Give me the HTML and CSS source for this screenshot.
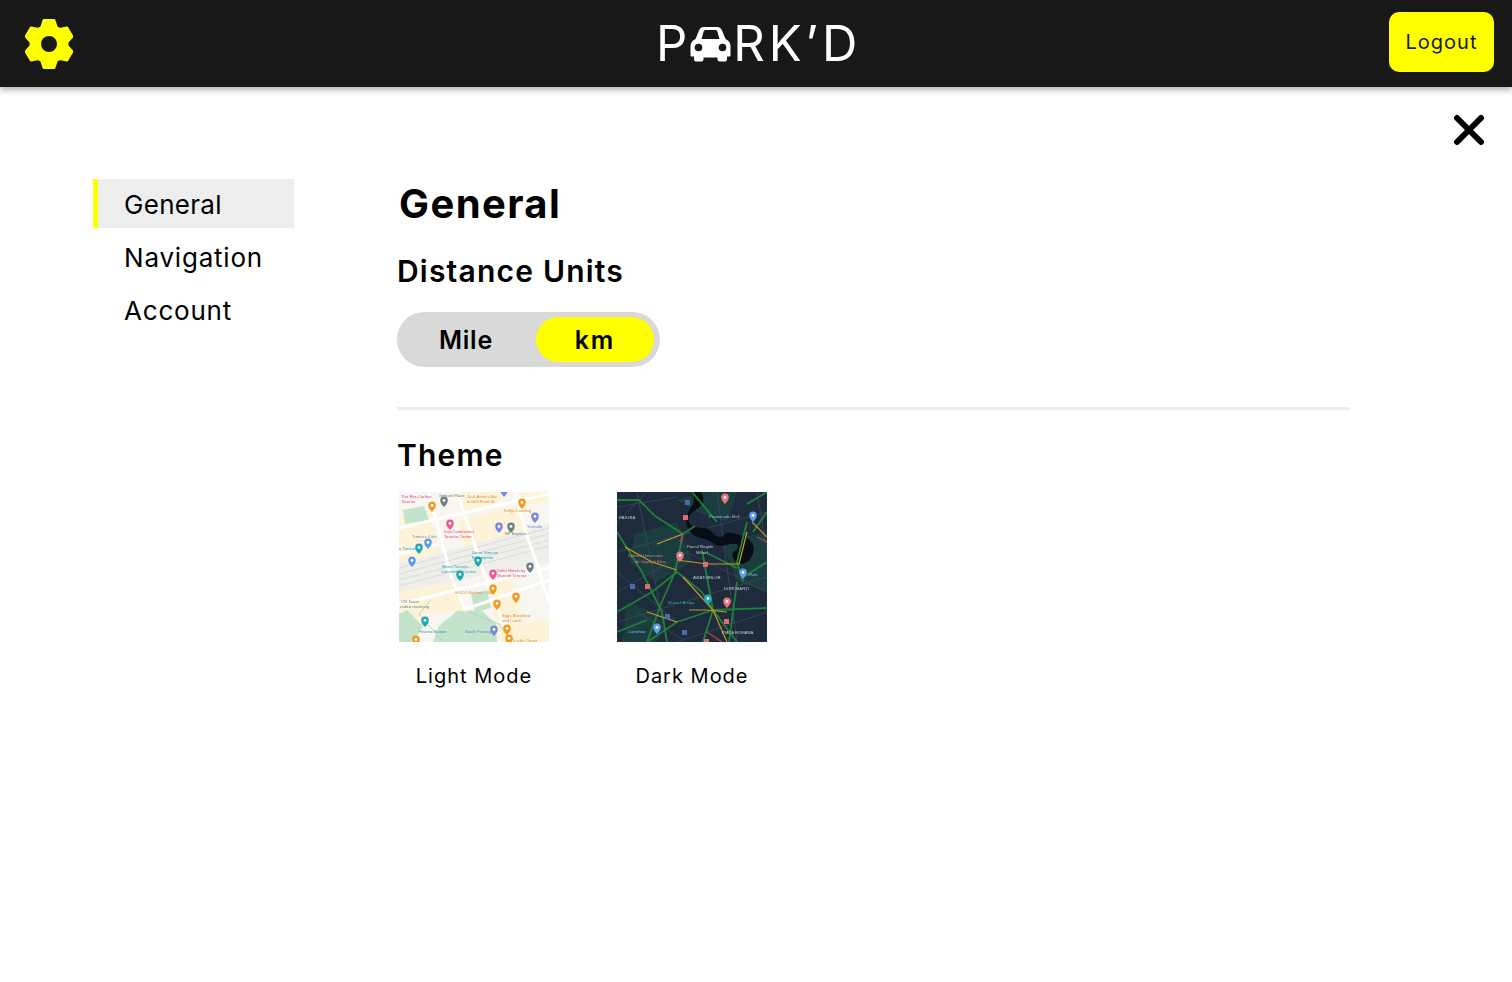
FILE: index.html
```html
<!DOCTYPE html>
<html>
<head>
	<meta charset="UTF-8">
	<title>Park'd</title>
	<link rel="stylesheet" href="styles.css">
</head>
<body>
	<header class="topbar">
		<svg class="gear" viewBox="0 0 48 50">
			<g transform="translate(24 25)">
				<circle r="18" class="gear-fill"/>
				<path class="gear-fill" d="M-5 -23.500H5L8 -14V14L5 23.500H-5L-8 14V-14Z"/>
				<path class="gear-fill" d="M-5 -23.500H5L8 -14V14L5 23.500H-5L-8 14V-14Z" transform="rotate(60)"/>
				<path class="gear-fill" d="M-5 -23.500H5L8 -14V14L5 23.500H-5L-8 14V-14Z" transform="rotate(120)"/>
				<circle r="8" class="gear-hole"/>
			</g>
		</svg>
		<div class="logo">
			<span class="logo-p">P</span>
			<svg class="car" viewBox="0 0 41 36">
				<path class="car-body" d="M9 4.500C10 2 11.500 1 14 1H27C29.500 1 31 2 32 4.500L35.500 13C38.500 14.500 40.500 16.500 40.500 20V29C40.500 30 40 30.500 39 30.500H37V33C37 35 36 35.500 34.500 35.500H30C28 35.500 27.500 34.500 27.500 33V31.500H13.500V33C13.500 34.500 13 35.500 11 35.500H6.500C5 35.500 4 35 4 33V30.500H2C1 30.500 .5 30 .5 29V20C.5 16.500 2.500 14.500 5.500 13Z"/>
				<path class="car-cut" d="M11.500 13L13.500 6C14 4.500 14.500 4 16 4H25C26.500 4 27 4.500 27.500 6L29.500 13Z"/>
				<circle class="car-cut" cx="8.500" cy="21.500" r="3.800"/>
				<circle class="car-cut" cx="32.500" cy="21.500" r="3.800"/>
			</svg>
			<span class="logo-rest">RK’D</span>
		</div>
		<button class="logout">Logout</button>
	</header>

	<div class="close-row">
		<svg class="close" viewBox="0 0 32 32">
			<path d="M4 4L28 28M28 4L4 28"/>
		</svg>
	</div>

	<main class="settings">
		<nav class="side">
			<a class="side-item active">General</a>
			<a class="side-item">Navigation</a>
			<a class="side-item">Account</a>
		</nav>

		<section class="panel">
			<h1>General</h1>
			<h2 class="units-title">Distance Units</h2>
			<div class="toggle">
				<span class="toggle-opt">Mile</span>
				<span class="toggle-opt on">km</span>
			</div>
			<hr class="line">
			<h2>Theme</h2>
			<div class="themes">
				<div class="theme">
					<svg class="thumb" viewBox="0 0 150 150">
						<defs>
							<g id="pin"><path d="M0 3C-1.800 .6-3.800 -1-3.800 -3.600A3.800 3.800 0 0 1 3.800 -3.600C3.800 -1 1.800 .6 0 3Z"/><circle cy="-3.600" r="1.400" fill="#fff"/></g>
						</defs>
						<rect width="150" height="150" class="m-land"/>
						<path class="m-block" d="M0 25L30 18L42 60L0 72ZM58 28L118 14L128 42L68 62ZM12 92L55 82L66 118L30 122L14 135L0 135L0 98ZM88 90L112 82L124 128L96 128ZM98 132L150 128V150H100ZM120 0H150V8L126 14ZM60 0H100L105 8L62 20ZM128 40L150 34V70L138 72Z"/>
						<path class="m-grey" d="M0 72L150 32V70L0 100Z"/>
						<path class="m-road2" d="M0 76L150 36M0 82L150 42M0 88L150 48M0 94L150 54"/>
						<path class="m-park" d="M34 150L40 134L58 119L82 118L97 132L98 150Z"/>
						<path class="m-park" d="M72 102L88 98L92 116L76 120Z"/>
						<path class="m-park" d="M0 122L8 118L24 134L14 150H0Z"/>
						<path class="m-park" d="M4 18L25 14L30 28L6 32Z"/>
						<path class="m-road" d="M0 36L60 22L150 2M58 0L68 30L86 84L112 150M116 0L126 38L138 72L150 110M30 0L44 54L52 84L66 118M0 112L66 96L150 76M64 118L150 88M0 62L40 52"/>
						<path class="m-tint" d="M32 108L20 122L44 150M70 120L100 132L112 150"/>

						<text class="lab pink" x="2" y="6">The Ritz-Carlton,</text>
						<text class="lab pink" x="2" y="10.500">Toronto</text>
						<text class="lab grey" x="40" y="5">Simcoe Place</text>
						<text class="lab orange" x="68" y="6">Jack Astor's Bar</text>
						<text class="lab orange" x="68" y="10.500">&amp; Grill Front St</text>
						<text class="lab orange" x="105" y="20">Kellys Landing</text>
						<text class="lab purple" x="128" y="36">Yorkville</text>
						<text class="lab grey" x="106" y="43">BP Express</text>
						<text class="lab pink" x="45" y="41">InterContinental</text>
						<text class="lab pink" x="45" y="45.500">Toronto Centre</text>
						<text class="lab purple" x="13" y="46">Tumoss Cafe</text>
						<text class="lab teal" x="0" y="58">a Toronto</text>
						<text class="lab teal" x="73" y="62">Union Simcoe</text>
						<text class="lab teal" x="73" y="66.500">Bridgepoint</text>
						<text class="lab teal" x="43" y="76">Metro Toronto</text>
						<text class="lab teal" x="42" y="80.500">Convention Centre</text>
						<text class="lab pink" x="98" y="80">Delta Hotels by</text>
						<text class="lab pink" x="98" y="84.500">Marriott Toronto</text>
						<text class="lab orange" x="56" y="102">SOCO Kitchen + Bar</text>
						<text class="lab grey" x="2" y="111">CN Tower</text>
						<text class="lab grey" x="1" y="115.500">rsdica revolving</text>
						<text class="lab orange" x="103" y="125">Eggs Breakfast</text>
						<text class="lab orange" x="103" y="129.500">and Lunch</text>
						<text class="lab teal" x="20" y="141">Historic Roque</text>
						<text class="lab purple" x="66" y="141">South Parking</text>
						<text class="lab orange" x="114" y="150">Lucky Clover</text>

						<use href="#pin" class="p-orange" x="33" y="17"/>
						<use href="#pin" class="p-grey" x="45" y="12"/>
						<use href="#pin" class="p-orange" x="123" y="14"/>
						<use href="#pin" class="p-purple" x="105" y="2"/>
						<use href="#pin" class="p-purple" x="136" y="28"/>
						<use href="#pin" class="p-purple" x="100" y="38"/>
						<use href="#pin" class="p-grey" x="112" y="38"/>
						<use href="#pin" class="p-pink" x="51" y="35"/>
						<use href="#pin" class="p-blue" x="29" y="54"/>
						<use href="#pin" class="p-teal" x="20" y="59"/>
						<use href="#pin" class="p-blue" x="13" y="72"/>
						<use href="#pin" class="p-teal" x="79" y="72"/>
						<use href="#pin" class="p-teal" x="61" y="86"/>
						<use href="#pin" class="p-pink" x="94" y="85"/>
						<use href="#pin" class="p-grey" x="131" y="78"/>
						<use href="#pin" class="p-orange" x="94" y="100"/>
						<use href="#pin" class="p-orange" x="117" y="108"/>
						<use href="#pin" class="p-orange" x="98" y="115"/>
						<use href="#pin" class="p-teal" x="26" y="132"/>
						<use href="#pin" class="p-purple" x="95" y="141"/>
						<use href="#pin" class="p-orange" x="108" y="140"/>
						<use href="#pin" class="p-orange" x="110" y="150"/>
						<use href="#pin" class="p-orange" x="17" y="151"/>
					</svg>
					<span class="theme-name">Light Mode</span>
				</div>
				<div class="theme">
					<svg class="thumb" viewBox="0 0 150 150">
						<rect width="150" height="150" class="d-land"/>
						<path class="d-park" d="M18 42L60 30L75 70L40 90L12 70ZM105 50L150 40V100L120 90ZM10 110L50 125L40 150H5ZM60 8L85 0H120L110 30L80 20Z"/>
						<path class="d-thin" d="M0 15L60 5M0 60L150 20M0 100L70 60L150 100M20 0L50 150M100 0L120 150M0 130L150 85M60 150L150 120M140 0L150 60M0 80L60 130M30 0L0 30M70 150L20 120"/>
						<path class="d-water" d="M84 0C92 14 78 16 72 24C68 34 80 36 88 36C96 38 98 48 106 44C110 38 118 42 126 44C136 48 140 56 134 66C128 74 120 74 116 66C112 58 124 60 120 52C110 50 104 58 94 50C86 44 78 48 72 38C66 30 70 20 76 12C78 6 76 2 74 0Z"/>
						<path class="d-green" d="M0 8L22 8L38 24L66 42L78 34M66 42L58 80L44 112L30 150M0 40L25 80L45 120L50 150M85 58L96 118L86 150M96 118L150 116M96 118L60 130L30 150M100 30L75 0M120 90L112 150M128 84L150 70M35 100L60 80L85 100L96 118M130 12L150 0M130 30L120 70L126 90M0 120L35 100M96 118L120 150M0 140L30 128M88 60L120 76M150 20L136 40"/>
						<path class="d-amber" d="M8 55L35 70L60 78M40 52L66 42M60 68L90 72L122 72M66 85L96 118L110 150M72 118L90 118L110 120M30 120L60 130M122 72L130 40M135 30L150 45"/>
						<path class="d-red" d="M140 45L150 50M66 42L63 50M90 140L105 150"/>

						<text class="lab d-w" x="2" y="27">PAJURA</text>
						<text class="lab d-blue" x="92" y="26">Promenada Mall</text>
						<text class="lab d-w" x="70" y="56">Parcul Regele</text>
						<text class="lab d-w" x="79" y="62">Mihai I</text>
						<text class="lab d-pink" x="11" y="65">Spitalul Universitar</text>
						<text class="lab d-pink" x="18" y="71">de Urgență Elias</text>
						<text class="lab d-w" x="76" y="87">AVIATORILOR</text>
						<text class="lab d-w" x="107" y="98">DOROBANȚI</text>
						<text class="lab d-blue" x="131" y="84">Work</text>
						<text class="lab d-teal" x="51" y="112">Muzeul Antipa</text>
						<text class="lab d-blue" x="11" y="141">Carrefour</text>
						<text class="lab d-w" x="105" y="142">PIAȚA ROMANA</text>

						<rect x="66" y="23" width="5" height="5" class="p-red"/>
						<rect x="86" y="70" width="5" height="5" class="p-red"/>
						<rect x="28" y="92" width="5" height="5" class="p-red"/>
						<rect x="107" y="127" width="5" height="5" class="p-red"/>
						<rect x="87" y="147" width="5" height="5" class="p-red"/>
						<rect x="68" y="8" width="5" height="5" class="p-navy"/>
						<rect x="13" y="92" width="5" height="5" class="p-navy"/>
						<rect x="48" y="122" width="5" height="5" class="p-navy"/>
						<rect x="65" y="138" width="5" height="5" class="p-navy"/>
						<use href="#pin" class="p-salmon" x="108" y="9"/>
						<use href="#pin" class="p-blue" x="136" y="27"/>
						<use href="#pin" class="p-salmon" x="63" y="67"/>
						<use href="#pin" class="p-blue" x="126" y="84"/>
						<use href="#pin" class="p-teal" x="91" y="110"/>
						<use href="#pin" class="p-salmon" x="110" y="113"/>
						<use href="#pin" class="p-blue" x="40" y="139"/>
					</svg>
					<span class="theme-name">Dark Mode</span>
				</div>
			</div>
		</section>
	</main>
</body>
</html>
```

FILE: styles.css
```css
* { box-sizing: border-box; }

body {
	margin: 0;
	height: 982px;
	overflow: hidden;
	background: #fff;
	color: #000;
	font-family: Inter, "Liberation Sans", sans-serif;
}

/* top bar */
.topbar {
	height: 87px;
	padding: 0 18px 0 25px;
	display: flex;
	align-items: center;
	justify-content: space-between;
	background: #181818;
	box-shadow: 0 3px 6px rgba(0, 0, 0, .3);
	position: relative;
}
.gear { width: 48px; height: 50px; margin-top: 1px; }
.gear-fill { fill: #ffff00; stroke: #ffff00; stroke-width: 3; stroke-linejoin: round; }
.gear-hole { fill: #181818; }

.logo {
	position: absolute;
	left: 656px;
	top: 18px;
	display: flex;
	align-items: center;
	height: 50px;
	color: #fff;
	font-size: 49px;
	font-weight: 400;
}
.logo-p { letter-spacing: 1px; }
.logo-rest { letter-spacing: 3.800px; }
.car { width: 41px; height: 36px; margin: 1px 2px 0 2px; }
.car-body { fill: #fff; }
.car-cut { fill: #181818; }

.logout {
	width: 105px;
	height: 60px;
	margin-bottom: 3px;
	border: 0;
	border-radius: 10px;
	background: #ffff00;
	color: #181818;
	font-family: inherit;
	font-size: 20px;
	letter-spacing: 1px;
}

.close-row {
	height: 92px;
	padding: 27px 27px 0 0;
	display: flex;
	justify-content: flex-end;
}
.close { width: 32px; height: 32px; }
.close path { fill: none; stroke: #000; stroke-width: 6; stroke-linecap: round; }

/* page */
.settings {
	display: flex;
	padding-left: 93px;
}
.side {
	width: 201px;
	margin-right: 103px;
	display: flex;
	flex-direction: column;
	gap: 4px;
}
.side-item {
	height: 49px;
	padding: 2px 0 0 31px;
	display: flex;
	align-items: center;
	font-size: 26px;
	letter-spacing: .8px;
}
.side-item.active {
	padding-left: 26px;
	border-left: 5px solid #ffff00;
	background: #eeeeee;
	letter-spacing: .3px;
}

.panel { width: 953px; }
h1 {
	margin: 0 0 0 2px;
	height: 50px;
	line-height: 50px;
	font-size: 40px;
	font-weight: 700;
	letter-spacing: 1.400px;
}
h2 {
	margin: 0;
	font-size: 30px;
	line-height: 36px;
	font-weight: 600;
	letter-spacing: 1.200px;
}
.units-title { margin-top: 24px; }

.toggle {
	width: 263px;
	height: 55px;
	margin-top: 23px;
	padding: 5px 6px 5px 0;
	display: flex;
	justify-content: space-between;
	border-radius: 28px;
	background: #d9d9d9;
}
.toggle-opt {
	width: 118px;
	margin-left: 10px;
	display: flex;
	align-items: center;
	justify-content: center;
	border-radius: 23px;
	font-size: 25px;
	font-weight: 600;
	letter-spacing: .8px;
}
.toggle-opt.on { margin: 0; background: #ffff00; letter-spacing: 2px; }

.line {
	height: 3px;
	margin: 40px 0 27px;
	border: 0;
	background: #eeeeee;
}

.themes {
	display: flex;
	gap: 68px;
	margin: 19px 0 0 2px;
}
.theme {
	width: 150px;
	display: flex;
	flex-direction: column;
	align-items: center;
}
.thumb { width: 150px; height: 150px; display: block; filter: blur(.35px); }
.theme-name {
	margin-top: 22px;
	font-size: 20px;
	line-height: 24px;
	letter-spacing: 1px;
}

/* map thumbnails */
.lab { font-size: 4.200px; font-weight: 500; font-family: "Liberation Sans", sans-serif; }
.pink { fill: #e8467f; }
.grey { fill: #6d7a80; }
.orange { fill: #d98a2b; }
.purple { fill: #7a84c8; }
.teal { fill: #2ba7ae; }

.m-land { fill: #f8f6f0; }
.m-block { fill: #fdf3d8; }
.m-grey { fill: #eeeeea; }
.m-park { fill: #c3e4cb; }
.m-road { fill: none; stroke: #fff; stroke-width: 3; }
.m-road2 { fill: none; stroke: #d4d5d6; stroke-width: .7; }
.m-tint { fill: none; stroke: #9ed4ae; stroke-width: .8; }

.p-orange { fill: #f29a1f; }
.p-grey { fill: #6f8088; }
.p-purple { fill: #7c88d8; }
.p-pink { fill: #ee5a8c; }
.p-salmon { fill: #e8757a; }
.p-blue { fill: #5c9cf0; }
.p-teal { fill: #1ca9b5; }
.p-red { fill: #e06a6e; }
.p-navy { fill: #4a6aa8; }

.d-land { fill: #1d2b3c; }
.d-park { fill: #1c3d40; }
.d-thin { fill: none; stroke: #38485a; stroke-width: .8; }
.d-water { fill: #070d14; }
.d-green { fill: none; stroke: #1f8038; stroke-width: 1.800; }
.d-amber { fill: none; stroke: #c79a2a; stroke-width: 1.200; }
.d-red { fill: none; stroke: #c04040; stroke-width: 1.200; }
.d-w { fill: #c8ccd0; }
.d-blue { fill: #8fb2e8; }
.d-pink { fill: #e57f72; }
.d-teal { fill: #3aa9a0; }
```
